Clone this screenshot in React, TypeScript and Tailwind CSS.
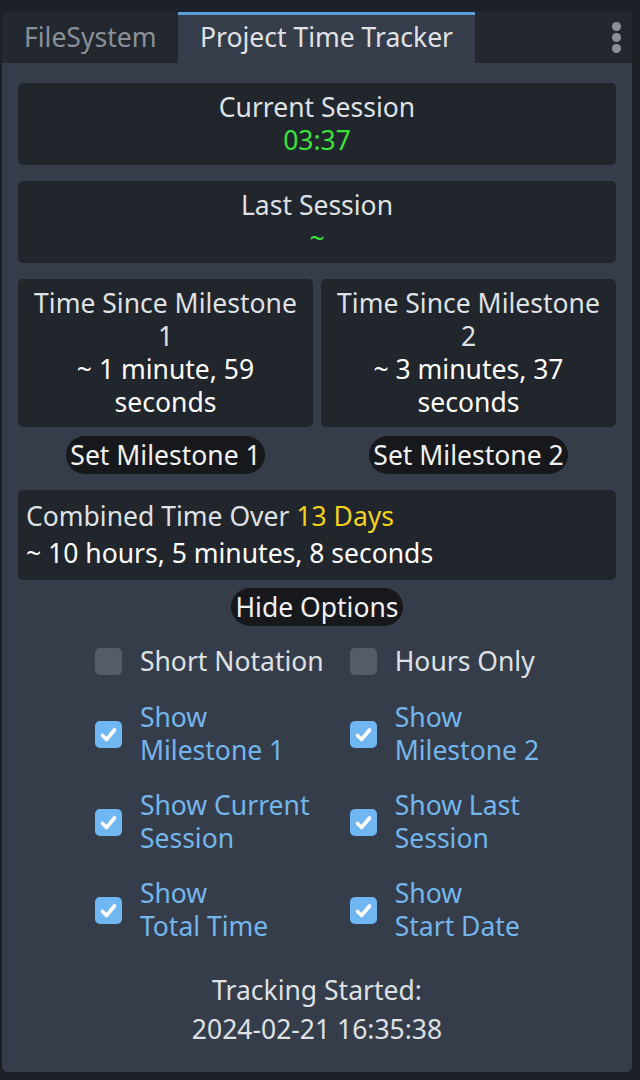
import React from "react";

const boxCls = "bg-[#21252c] rounded-[5px]";

function StatBox({ title, value, valueCls }: { title: string; value: string; valueCls: string }) {
  return (
    <div className={`${boxCls} py-[8px] flex flex-col items-center`}>
      <span className="text-[#dfe1e5]">{title}</span>
      <span className={valueCls}>{value}</span>
    </div>
  );
}

function PillButton({ label }: { label: string }) {
  return (
    <button className="h-[38px] px-[4px] rounded-full bg-[#17181b] text-[#f2f2f2] leading-[33px] whitespace-nowrap">
      {label}
    </button>
  );
}

function Check({ checked, label }: { checked: boolean; label: React.ReactNode }) {
  return (
    <div className="flex items-center gap-[18px]">
      {checked ? (
        <span className="w-[27px] h-[27px] shrink-0 rounded-[5px] bg-[#6fb6f2] flex items-center justify-center">
          <svg width="27" height="27" viewBox="0 0 27 27">
            <path d="M7.5 14.5 L11.5 18.5 L19.5 9" fill="none" stroke="#fff" strokeWidth="3.6" strokeLinecap="round" strokeLinejoin="round" />
          </svg>
        </span>
      ) : (
        <span className="w-[27px] h-[27px] shrink-0 rounded-[5px] bg-[#565c67]" />
      )}
      <span className={`whitespace-nowrap ${checked ? "text-[#74b6ec]" : "text-[#dfe1e5]"}`}>{label}</span>
    </div>
  );
}

export default function App() {
  return (
    <div
      className="w-[640px] h-[1080px] bg-[#1c2027] pt-[12px] pl-[2px] pr-[8px] pb-[8px] text-[26.5px] leading-[33px]"
      style={{ fontFamily: "'Noto Sans', 'Open Sans', sans-serif" }}
    >
      <div className="h-full rounded-[6px] bg-[#363d4a] flex flex-col overflow-hidden">
        {/* tab bar */}
        <div className="h-[51px] flex bg-[#232830] shrink-0">
          <div className="w-[176px] flex items-center pl-[22px] text-[#8a9099]">FileSystem</div>
          <div className="w-[297px] bg-[#363d4a] border-t-[3px] border-[#5b9fd9] flex items-center justify-center text-[#e0e2e6] pb-[3px]">
            Project Time Tracker
          </div>
          <div className="flex-1" />
          <div className="w-[30px] flex flex-col items-center pt-[10px] gap-[2px] mr-[1px]">
            <span className="w-[9px] h-[9px] rounded-full bg-[#8b9099]" />
            <span className="w-[9px] h-[9px] rounded-full bg-[#8b9099]" />
            <span className="w-[9px] h-[9px] rounded-full bg-[#8b9099]" />
          </div>
        </div>

        <div className="flex flex-col px-[16px] pt-[20px]">
          <StatBox title="Current Session" value="03:37" valueCls="text-[#3ce33c]" />
          <div className="mt-[16px]">
            <StatBox title="Last Session" value="~" valueCls="text-[#3ce33c]" />
          </div>

          <div className="mt-[16px] grid grid-cols-2 gap-x-[8px]">
            <div className={`${boxCls} py-[8px] text-center`}>
              <div className="text-[#dfe1e5]">Time Since Milestone<br />1</div>
              <div className="text-white">~ 1 minute, 59<br />seconds</div>
            </div>
            <div className={`${boxCls} py-[8px] text-center`}>
              <div className="text-[#dfe1e5]">Time Since Milestone<br />2</div>
              <div className="text-white">~ 3 minutes, 37<br />seconds</div>
            </div>
          </div>

          <div className="mt-[9px] grid grid-cols-2 gap-x-[8px]">
            <div className="flex justify-center"><PillButton label="Set Milestone 1" /></div>
            <div className="flex justify-center"><PillButton label="Set Milestone 2" /></div>
          </div>

          <div className={`${boxCls} mt-[16px] px-[8px] py-[10px] flex flex-col gap-[4px]`}>
            <span className="text-[#dfe1e5]">
              Combined Time Over <span className="text-[#f3d31c]">13 Days</span>
            </span>
            <span className="text-white">~ 10 hours, 5 minutes, 8 seconds</span>
          </div>

          <div className="mt-[8px] flex justify-center">
            <PillButton label="Hide Options" />
          </div>

          <div className="mt-[18px] mx-auto grid grid-cols-[auto_auto] gap-x-[26px] gap-y-[22px]">
            <div className="min-h-[35px] flex"><Check checked={false} label="Short Notation" /></div>
            <div className="min-h-[35px] flex"><Check checked={false} label="Hours Only" /></div>
            <Check checked label={<>Show<br />Milestone 1</>} />
            <Check checked label={<>Show<br />Milestone 2</>} />
            <Check checked label={<>Show Current<br />Session</>} />
            <Check checked label={<>Show Last<br />Session</>} />
            <Check checked label={<>Show<br />Total Time</>} />
            <Check checked label={<>Show<br />Start Date</>} />
          </div>

          <div className="mt-[31px] flex flex-col items-center text-[#dfe1e5] gap-[6px]">
            <span>Tracking Started:</span>
            <span>2024-02-21 16:35:38</span>
          </div>
        </div>
      </div>
    </div>
  );
}
